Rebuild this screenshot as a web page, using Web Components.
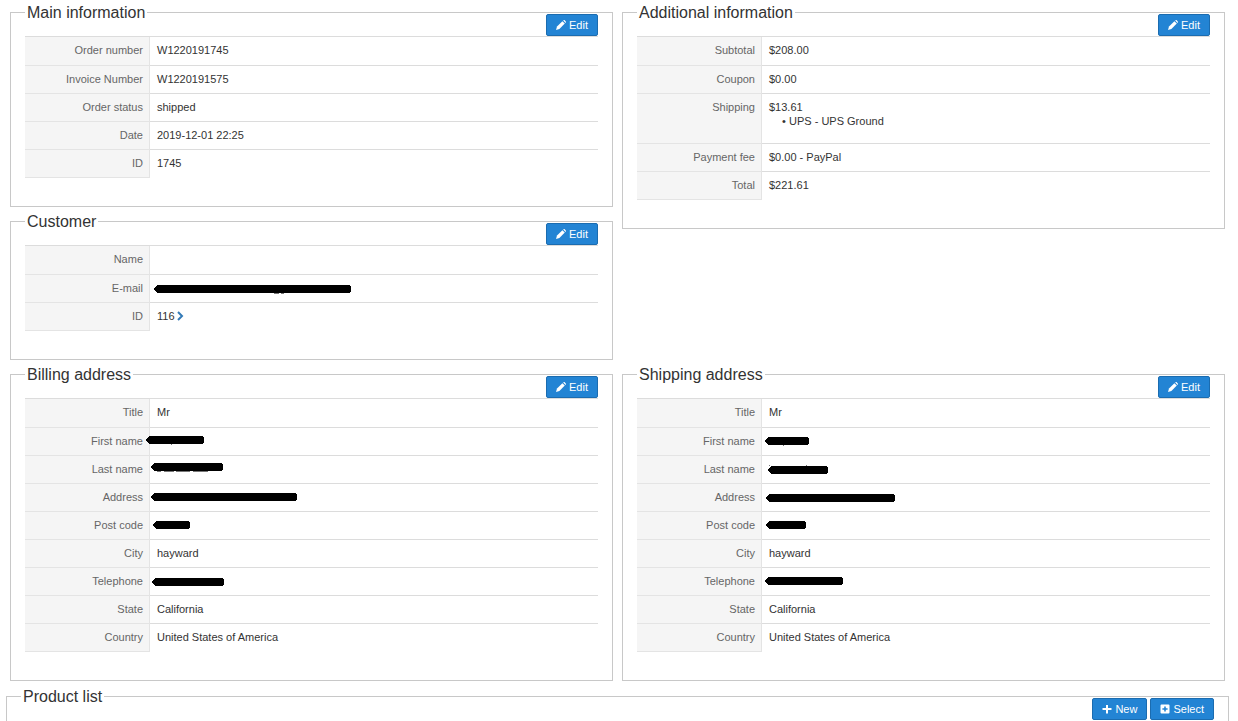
<!DOCTYPE html>
<html lang="en">
<head>
<meta charset="utf-8">
<title>Order W1220191745</title>
<style>
  body {
    margin: 3px 9px 0 6px;
    background: #fff;
    color: #333;
    font-family: "Liberation Sans", Arial, sans-serif;
    font-size: 11px;
    line-height: 14px;
  }
  ul {
    margin: 0 0 8px;
    padding-left: 20px;
    list-style-type: "• ";
  }
</style>
</head>
<body>
<order-layout>
  <info-panel slot="left" heading="Main information">
    <action-button slot="actions" icon="pencil">Edit</action-button>
    <info-table>
      <span data-label="Order number">W1220191745</span>
      <span data-label="Invoice Number">W1220191575</span>
      <span data-label="Order status">shipped</span>
      <span data-label="Date">2019-12-01 22:25</span>
      <span data-label="ID">1745</span>
    </info-table>
  </info-panel>

  <info-panel slot="left" heading="Customer">
    <action-button slot="actions" icon="pencil">Edit</action-button>
    <info-table>
      <span data-label="Name"></span>
      <hidden-value data-label="E-mail" from="-3" to="194" y="8" marks="117,12,5 124,12,3"></hidden-value>
      <span data-label="ID">116 <detail-link href="#customer-116"></detail-link></span>
    </info-table>
  </info-panel>

  <info-panel slot="right" heading="Additional information">
    <action-button slot="actions" icon="pencil">Edit</action-button>
    <info-table>
      <span data-label="Subtotal">$208.00</span>
      <span data-label="Coupon">$0.00</span>
      <div data-label="Shipping">$13.61<ul><li>UPS - UPS Ground</li></ul></div>
      <span data-label="Payment fee">$0.00 - PayPal</span>
      <span data-label="Total">$221.61</span>
    </info-table>
  </info-panel>

  <info-panel slot="billing" heading="Billing address">
    <action-button slot="actions" icon="pencil">Edit</action-button>
    <info-table>
      <span data-label="Title">Mr</span>
      <hidden-value data-label="First name" from="-11" to="47" y="6" marks="14,10,1"></hidden-value>
      <hidden-value data-label="Last name" from="-6" to="66" y="5" marks="0,9,4 7,9,10 19,9,14 36,9,15"></hidden-value>
      <hidden-value data-label="Address" from="-6" to="140" y="7"></hidden-value>
      <hidden-value data-label="Post code" from="-4" to="33" y="7"></hidden-value>
      <span data-label="City">hayward</span>
      <hidden-value data-label="Telephone" from="-5" to="67" y="8"></hidden-value>
      <span data-label="State">California</span>
      <span data-label="Country">United States of America</span>
    </info-table>
  </info-panel>

  <info-panel slot="shipping" heading="Shipping address">
    <action-button slot="actions" icon="pencil">Edit</action-button>
    <info-table>
      <span data-label="Title">Mr</span>
      <hidden-value data-label="First name" from="-4" to="40" y="7" marks="14,11,1"></hidden-value>
      <hidden-value data-label="Last name" from="-1" to="59" y="8" marks="0,3,1 37,3,1"></hidden-value>
      <hidden-value data-label="Address" from="-3" to="126" y="8"></hidden-value>
      <hidden-value data-label="Post code" from="-3" to="37" y="7"></hidden-value>
      <span data-label="City">hayward</span>
      <hidden-value data-label="Telephone" from="-4" to="74" y="7"></hidden-value>
      <span data-label="State">California</span>
      <span data-label="Country">United States of America</span>
    </info-table>
  </info-panel>

  <info-panel slot="products" heading="Product list">
    <action-button slot="actions" icon="plus">New</action-button>
    <action-button slot="actions" icon="plus-square">Select</action-button>
  </info-panel>
</order-layout>

<script>
const ICONS = {
  pencil: `<path d="M0 10l1-3.4L6.4 1.2l2.4 2.4L3.4 9z"/><path d="M7.1.6C7.7-.1 8.3-.1 8.9.5l.7.7c.6.6.5 1.2-.1 1.8z"/>`,
  plus: `<path d="M4 1h2v3h3.5v2H6v3.5H4V6H.5V4H4z"/>`,
  "plus-square": `<path fill-rule="evenodd" d="M1.5.5h7q1 0 1 1v7q0 1-1 1h-7q-1 0-1-1v-7q0-1 1-1zM4.2 2.4v1.8H2.4v1.6h1.8v1.8h1.6V5.8h1.8V4.2H5.8V2.4z"/>`
};

// Page grid: two columns of panels, product list below
class OrderLayout extends HTMLElement {
  constructor() {
    super();
    this.attachShadow({ mode: "open" });
  }

  connectedCallback() {
    this.shadowRoot.innerHTML = `
      <style>
        :host {
          display: block;
        }
        .columns {
          display: grid;
          grid-template-columns: 1fr 1fr;
          gap: 5px 9px;
          padding: 0 4px;
          margin-bottom: 6px;
        }
        .stack {
          display: flex;
          flex-direction: column;
          gap: 5px;
        }
      </style>
      <div class="columns">
        <div class="stack"><slot name="left"></slot></div>
        <div class="stack"><slot name="right"></slot></div>
        <slot name="billing"></slot>
        <slot name="shipping"></slot>
      </div>
      <slot name="products"></slot>
    `;
  }
}

// Bordered group with a heading and its buttons
class InfoPanel extends HTMLElement {
  constructor() {
    super();
    this.attachShadow({ mode: "open" });
  }

  connectedCallback() {
    this.shadowRoot.innerHTML = `
      <style>
        :host {
          display: block;
          min-width: 0;
        }
        fieldset {
          min-width: 0;
          margin: 0;
          padding: 0 14px 28px;
          border: 1px solid #c8c8c8;
        }
        legend {
          padding: 0 2px;
          font-size: 16px;
          line-height: 19px;
        }
        .actions {
          display: flex;
          justify-content: flex-end;
          gap: 3px;
          margin-top: -8px;
        }
      </style>
      <fieldset>
        <legend>${this.getAttribute("heading")}</legend>
        <div class="actions"><slot name="actions"></slot></div>
        <slot></slot>
      </fieldset>
    `;
  }
}

// Builds one table row for each child that has a data-label
class InfoTable extends HTMLElement {
  constructor() {
    super();
    this.attachShadow({ mode: "open" });
  }

  connectedCallback() {
    const rows = Array.from(this.children).map((child, index) => {
      child.slot = `value-${index}`;
      return `
        <tr>
          <th scope="row">${child.dataset.label}</th>
          <td><slot name="value-${index}"></slot></td>
        </tr>`;
    });

    this.shadowRoot.innerHTML = `
      <style>
        :host {
          display: block;
        }
        table {
          width: 100%;
          border-spacing: 0;
          border-top: 1px solid #dcdcdc;
          table-layout: fixed;
        }
        th, td {
          padding: 6px 6px 7px;
          height: 14px;
          vertical-align: top;
          border-bottom: 1px solid #dcdcdc;
        }
        th {
          width: 112px;
          text-align: right;
          font-weight: normal;
          color: #666;
          background: #f5f5f5;
          border-right: 1px solid #e4e4e4;
          border-bottom-color: #e4e4e4;
        }
        td {
          padding-left: 7px;
        }
        tr:first-child > * {
          padding-bottom: 8px;
        }
        tr:last-child td {
          border-bottom-color: transparent;
        }
      </style>
      <table><tbody>${rows.join("")}</tbody></table>
    `;
  }
}

class ActionButton extends HTMLElement {
  constructor() {
    super();
    this.attachShadow({ mode: "open" });
  }

  connectedCallback() {
    this.shadowRoot.innerHTML = `
      <style>
        :host {
          display: block;
        }
        button {
          display: flex;
          align-items: center;
          gap: 3px;
          height: 22px;
          padding: 0 9px;
          border: 1px solid #1b6cb0;
          border-radius: 2px;
          background: #2384d4;
          color: #fff;
          font: inherit;
          cursor: pointer;
        }
        svg {
          width: 10px;
          height: 10px;
          fill: currentColor;
        }
      </style>
      <button type="button">
        <svg viewBox="0 0 10 10" aria-hidden="true">${ICONS[this.getAttribute("icon")]}</svg>
        <slot></slot>
      </button>
    `;
  }
}

// Small chevron that opens the record
class DetailLink extends HTMLElement {
  constructor() {
    super();
    this.attachShadow({ mode: "open" });
  }

  connectedCallback() {
    this.shadowRoot.innerHTML = `
      <style>
        :host {
          display: inline-block;
        }
        svg {
          width: 6px;
          height: 8px;
          fill: none;
          stroke: #337ab7;
          stroke-width: 2;
          overflow: visible;
        }
      </style>
      <a href="${this.getAttribute("href")}" aria-label="Open customer"><svg viewBox="0 0 6 8"><path d="M0 0L4 4 0 8"/></svg></a>
    `;
  }
}

// Value struck out with a thick marker line
class HiddenValue extends HTMLElement {
  constructor() {
    super();
    this.attachShadow({ mode: "open" });
  }

  connectedCallback() {
    const from = Number(this.getAttribute("from"));
    const to = Number(this.getAttribute("to"));
    const y = Number(this.getAttribute("y"));
    const marks = (this.getAttribute("marks") || "").split(" ").filter(Boolean).map((mark) => {
      const [x, top, width] = mark.split(",");
      return `<rect x="${x}" y="${top}" width="${width}" height="1" fill="#777"/>`;
    });

    this.shadowRoot.innerHTML = `
      <style>
        :host {
          display: block;
          height: 14px;
        }
        svg {
          display: block;
          width: 100%;
          height: 14px;
          overflow: visible;
        }
      </style>
      <svg aria-hidden="true" shape-rendering="crispEdges">
        <path d="M${from} ${y}l1-2 2-2H${to - 2}l2 2v4l-2 2H${from + 3}l-2-2z"/>
        ${marks.join("")}
      </svg>
    `;
  }
}

// Register custom elements
customElements.define("order-layout", OrderLayout);
customElements.define("info-panel", InfoPanel);
customElements.define("info-table", InfoTable);
customElements.define("action-button", ActionButton);
customElements.define("detail-link", DetailLink);
customElements.define("hidden-value", HiddenValue);
</script>
</body>
</html>
